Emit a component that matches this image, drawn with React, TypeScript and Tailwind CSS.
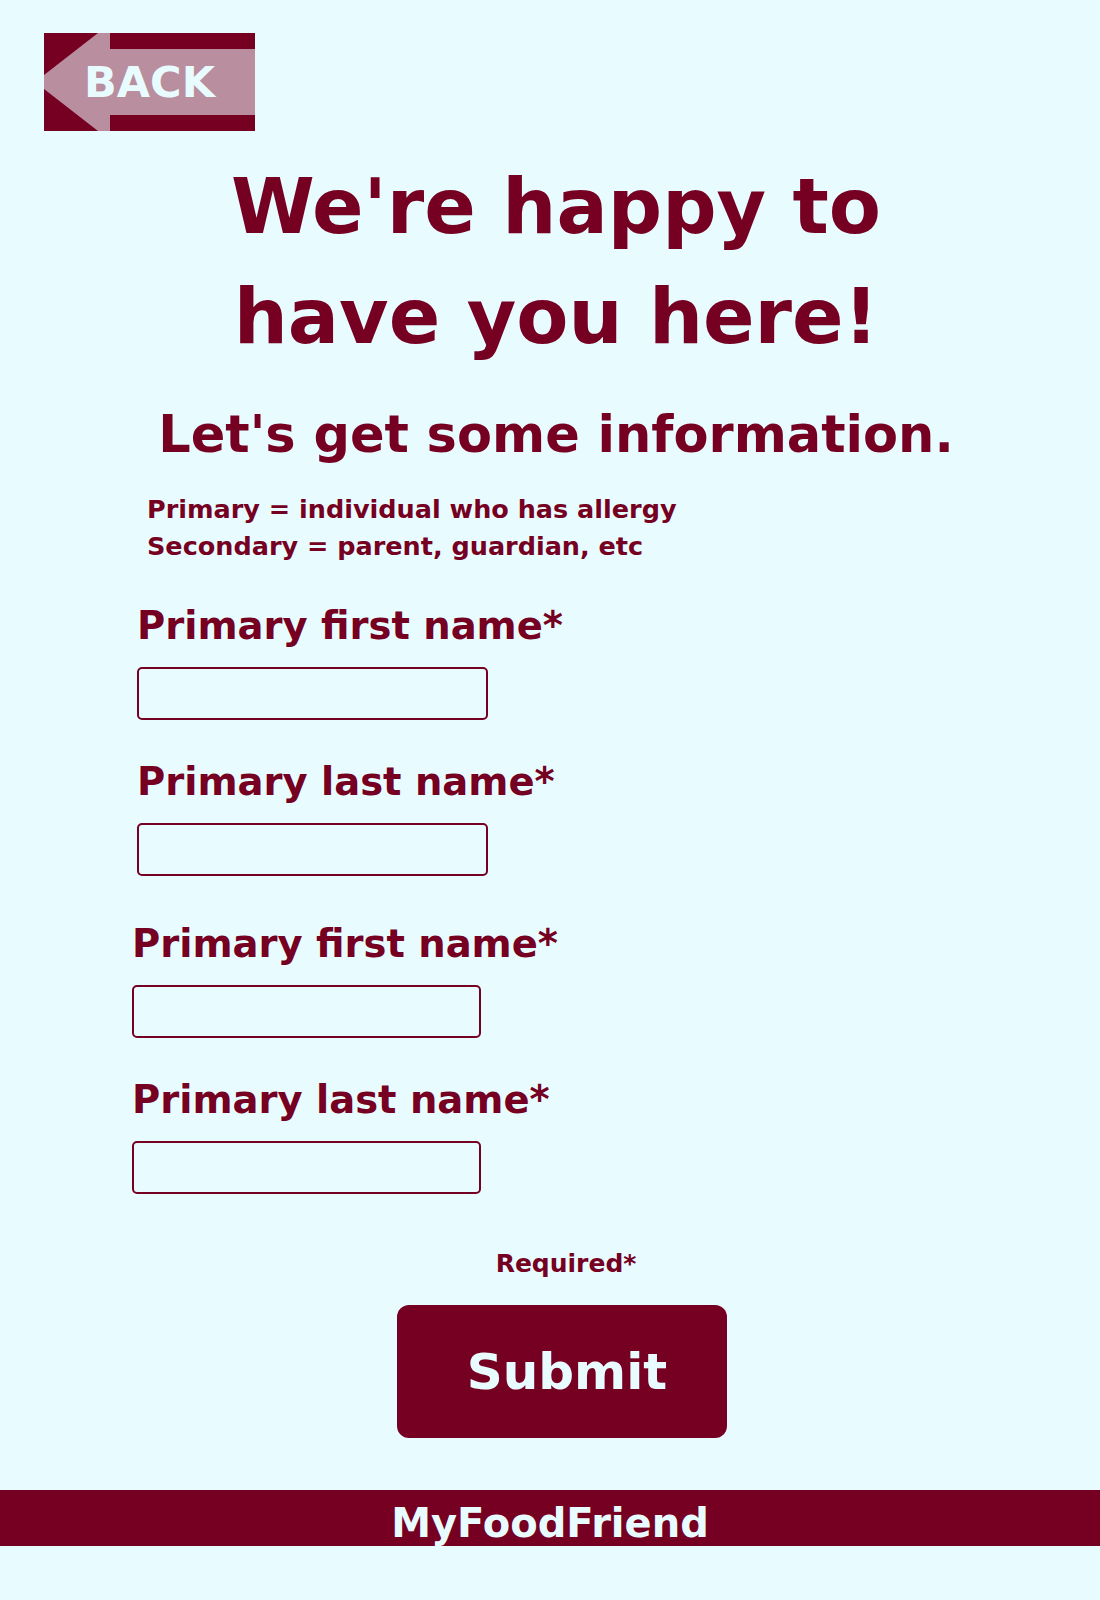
import React from "react";

const maroon = "#760022";

function BackButton() {
  return (
    <button className="relative block w-[211px] h-[98px] cursor-pointer" aria-label="Back">
      <svg width="211" height="98" viewBox="0 0 211 98" className="block">
        <rect x="0" y="0" width="211" height="98" fill={maroon} />
        <polygon
          points="0,42 54,0 66,0 66,16 211,16 211,82 66,82 66,98 54,98 0,56"
          fill="#b98e9e"
        />
      </svg>
      <span className="absolute inset-0 flex items-center justify-center text-[43px] leading-none text-[#e8fcff]">
        BACK
      </span>
    </button>
  );
}

function Field({ label, indent, mt }: { label: string; indent: "a" | "b"; mt: string }) {
  return (
    <div className={`${indent === "a" ? "pl-[137px]" : "pl-[132px]"} ${mt}`}>
      <label className="block text-[38.5px] leading-[46px]">{label}</label>
      <input
        type="text"
        className={`mt-[18px] block h-[53px] ${indent === "a" ? "w-[351px]" : "w-[349px]"} border-2 border-[#760022] rounded-[5px] bg-transparent outline-none px-2`}
      />
    </div>
  );
}

export default function App() {
  return (
    <div className="min-h-[1600px] bg-[#e8fcff] text-[#760022] font-['DejaVu_Sans','Liberation_Sans',sans-serif] font-bold">
      <div className="pt-[33px] pl-[44px]">
        <BackButton />
      </div>

      <div className="pl-[12px] text-center">
        <h1 className="mt-[21px] text-[76px] leading-[110px]">
          We're happy to
          <br />
          have you here!
        </h1>
        <h2 className="mt-[33px] text-[51px] leading-[60px]">Let's get some information.</h2>
      </div>

      <div className="mt-[26px] pl-[147px] text-[25.5px] leading-[37px]">
        <p>Primary = individual who has allergy</p>
        <p>Secondary = parent, guardian, etc</p>
      </div>

      <form onSubmit={(e) => e.preventDefault()}>
        <Field label="Primary first name*" indent="a" mt="mt-[38px]" />
        <Field label="Primary last name*" indent="a" mt="mt-[39px]" />
        <Field label="Primary first name*" indent="b" mt="mt-[45px]" />
        <Field label="Primary last name*" indent="b" mt="mt-[39px]" />

        <p className="mt-[51px] pl-[32px] text-center text-[25px] leading-[37px]">Required*</p>

        <div className="mt-[23px] flex justify-center pl-[24px]">
          <button
            type="submit"
            className="w-[330px] h-[133px] rounded-[12px] bg-[#760022] text-[#e8fcff] text-[50px] leading-none pl-[10px] flex items-center justify-center"
          >
            Submit
          </button>
        </div>
      </form>

      <footer className="mt-[52px] h-[56px] bg-[#760022] text-center text-[#e8fcff] text-[40px] leading-[46px] pt-[10px]">
        MyFoodFriend
      </footer>
    </div>
  );
}
